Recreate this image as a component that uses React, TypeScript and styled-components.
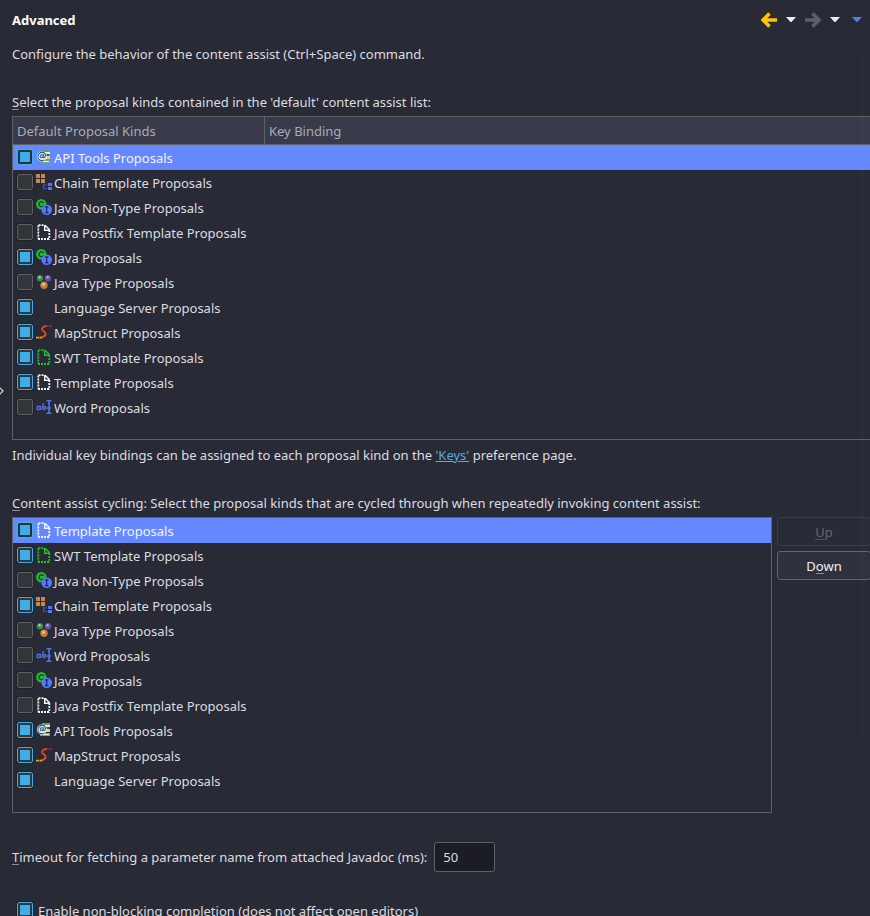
import React from 'react';
import styled, { createGlobalStyle, css } from 'styled-components';

const GlobalStyle = createGlobalStyle`
  *, *::before, *::after { box-sizing: border-box; }
  body {
    margin: 0;
    background: #282a35;
    color: #dcdde0;
    font: 13px/18px "Noto Sans", sans-serif;
    overflow: hidden;
  }
`;

const Page = styled.main`
  position: relative;
  padding: 8px 0 0 12px;
  overflow: hidden;
`;

const Header = styled.header`
  display: flex;
  align-items: center;
  justify-content: space-between;
  height: 24px;
`;

const Title = styled.h1`
  margin: 0;
  font-size: 13px;
  line-height: 18px;
  font-weight: 700;
  color: #fff;
`;

const Toolbar = styled.div`
  display: flex;
  align-items: center;
  padding-right: 8px;
`;

const ToolButton = styled.button<{ $gap: number }>`
  display: flex;
  margin: 0 0 0 ${(p) => p.$gap}px;
  padding: 0;
  border: 0;
  background: none;
`;

const Paragraph = styled.p<{ $top: number }>`
  margin: ${(p) => p.$top}px 0 0;
`;

const Mnemonic = styled.span`
  border-bottom: 1px solid #8b8c92;
  display: inline-block;
  line-height: 14px;
`;

const Link = styled.a`
  color: #5aa9e0;
  text-decoration: underline;
`;

const ProposalTable = styled.table`
  width: 100%;
  margin-top: 5px;
  border-spacing: 0;
  border: 1px solid #5f6265;
  border-right: 0;
  padding-bottom: 19px;
  table-layout: fixed;
`;

const HeadCell = styled.th<{ $width?: number }>`
  width: ${(p) => (p.$width ? `${p.$width}px` : 'auto')};
  height: 28px;
  padding: 0 4px;
  text-align: left;
  font-weight: 400;
  color: #a9abb5;
  background: #393b4b;
  border-bottom: 1px solid #5f6265;

  & + & {
    border-left: 1px solid #5f6265;
  }
`;

const selectedRow = css`
  background: #6688ff;
  color: #f2f4ff;
`;

const BodyRow = styled.tr<{ $selected: boolean }>`
  ${(p) => p.$selected && selectedRow}
`;

const BodyCell = styled.td`
  height: 25px;
  padding: 0 0 0 4px;
`;

const List = styled.ul`
  margin: 0;
  padding: 0 0 19px;
  list-style: none;
  border: 1px solid #5f6265;
`;

const ListItem = styled.li<{ $selected: boolean }>`
  height: 25px;
  padding-left: 4px;
  display: flex;
  align-items: center;
  ${(p) => p.$selected && selectedRow}
`;

const ItemLabel = styled.label`
  display: flex;
  align-items: center;
`;

const IconSlot = styled.span`
  display: flex;
  width: 16px;
  height: 16px;
  margin: 0 2px 0 3px;
  align-self: flex-start;
`;

const Checkbox = styled.input`
  appearance: none;
  width: 16px;
  height: 16px;
  margin: 0;
  flex: none;
  align-self: flex-start;
  border: 1px solid #5f6265;
  border-radius: 2px;
  background: #31363b;
  outline: 1px solid #202228;

  &:checked {
    border-color: #3daee9;
    background: linear-gradient(#3daee9, #3daee9) center / 10px 10px no-repeat #31363b;
  }
`;

const SelectedCheckbox = styled(Checkbox)`
  outline-color: #4b9ff0;

  &&:checked {
    border-color: #3daee9;
    background: #3daee9;
    box-shadow: inset 0 0 0 2px #2d3238;
  }
`;

const Cycling = styled.section`
  display: grid;
  grid-template-columns: 1fr 94px;
  column-gap: 5px;
  margin: 5px -1px 0 0;
`;

const ButtonColumn = styled.div`
  display: flex;
  flex-direction: column;
  gap: 5px;
`;

const PushButton = styled.button`
  height: 29px;
  padding: 0;
  font: inherit;
  color: #f0f1f3;
  background: #2f313f;
  border: 1px solid #62656a;
  border-radius: 3px;

  &:disabled {
    color: #65676e;
    background: #292b36;
    border-color: #3b3d46;
  }

  &:disabled ${Mnemonic} {
    border-color: #50525a;
  }
`;

const Field = styled.div`
  display: flex;
  align-items: center;
  gap: 7px;
  margin-top: 29px;
`;

const NumberInput = styled.input`
  width: 61px;
  height: 30px;
  padding: 0 8px;
  font: inherit;
  color: #dcdde0;
  background: #1b1c24;
  border: 1px solid #5f6265;
  border-radius: 3px;
`;

const Option = styled.label`
  display: flex;
  align-items: center;
  gap: 5px;
  margin: 30px 0 0 5px;
`;

const ScrollThumb = styled.div`
  position: absolute;
  top: 50px;
  right: 4px;
  width: 6px;
  height: 692px;
  border-radius: 3px;
  background: rgba(255, 255, 255, 0.012);
`;

const Expander = styled.button`
  position: absolute;
  left: 0;
  top: 386px;
  padding: 0;
  border: 0;
  background: none;
  display: flex;
`;

type IconKind = 'api' | 'chain' | 'java' | 'page' | 'greenPage' | 'types' | 'map' | 'word' | 'none';

function PageIcon({ color }: { color: string }) {
  return (
    <svg width="16" height="16" viewBox="0 0 16 16" fill="none" stroke={color}>
      <path d="M2.3 1.5v13" strokeWidth="1.8" strokeDasharray="2 1" />
      <path d="M2 15h12" strokeWidth="1.8" strokeDasharray="2 1" />
      <path d="M13.3 6v9.5" strokeWidth="1.8" strokeDasharray="2 1" />
      <path d="M2.5 1.2h6" strokeWidth="1.7" strokeDasharray="2 1" />
      <path d="M8.7 1v5.2h5M9 1.2l4.6 4.6" strokeWidth="1.5" />
    </svg>
  );
}

function ProposalIcon({ kind }: { kind: IconKind }) {
  switch (kind) {
    case 'api':
      return (
        <svg width="16" height="16" viewBox="0 0 16 16">
          <path d="M6 1h8v2H6z" fill="#6d9a62" />
          <path d="M7 3h7v2H7z" fill="#e9eed8" />
          <path d="M10 5h3v2h-3z" fill="#35588f" />
          <path d="M9 7h5v3H9z" fill="#ecd65b" />
          <path d="M4 11h10v3H4z" fill="#78a67d" />
          <path d="M7 12h6v1H7z" fill="#e5edd8" />
          <circle cx="5.8" cy="7.5" r="5" fill="#e5eff5" />
          <path
            d="M8.5 10.9C6 12.4 1.9 11.4 1.9 7.7 1.9 5.1 4 3.4 6.2 3.4c2.2 0 3.5 1.5 3.2 3.5-.2 1.8-2.5 2.5-2.2.6l.4-2.2M7.1 7.2C6.1 9.4 4 9.1 4.3 7.2c.4-1.7 2.5-2.1 2.9-.5"
            fill="none"
            stroke="#2c5f82"
            strokeWidth="1.1"
          />
        </svg>
      );
    case 'chain':
      return (
        <svg width="16" height="16" viewBox="0 0 16 16">
          <path d="M0 0h4v4H0zM5 0h4v4H5zM0 5h4v4H0zM5 5h4v4H5z" fill="#c88745" />
          <path d="M7.5 9.5v5H11M7.5 11H11" stroke="#4158c8" fill="none" />
          <path d="M12 9h4v3h-4zM12 13h4v3h-4z" fill="#5575f5" />
        </svg>
      );
    case 'java':
      return (
        <svg width="16" height="16" viewBox="0 0 16 16">
          <circle cx="5.3" cy="5.2" r="5.2" fill="#24b832" />
          <path d="M7.6 3.8C6.5 2.2 3 2.5 3 5.2c0 2.8 3.5 3 4.6 1.4" fill="none" stroke="#123d20" strokeWidth="1.3" />
          <circle cx="10.7" cy="10.7" r="5.3" fill="#5878fa" />
          <path d="M9 7.8h3.4M10.7 7.8v5.8M9 13.6h3.4" stroke="#1b285e" strokeWidth="1.2" />
        </svg>
      );
    case 'page':
      return <PageIcon color="#f4f4f5" />;
    case 'greenPage':
      return <PageIcon color="#24bd32" />;
    case 'types':
      return (
        <svg width="16" height="16" viewBox="0 0 16 16">
          <circle cx="4" cy="4.2" r="3.2" fill="#3b8750" />
          <circle cx="3.6" cy="3.3" r="1.2" fill="#a5d3a8" />
          <circle cx="12" cy="4.2" r="3.2" fill="#6450a6" />
          <circle cx="11.6" cy="3.3" r="1.2" fill="#b5a5dd" />
          <circle cx="8" cy="11.2" r="3.7" fill="#c67e38" />
          <circle cx="7.5" cy="10.2" r="1.5" fill="#f1c68a" />
        </svg>
      );
    case 'map':
      return (
        <svg width="16" height="16" viewBox="0 0 16 16" fill="none">
          <path
            d="M11 2C8 2 5.5 3.8 6 5.5 6.6 7.2 10.2 7.6 9.6 10.2 9.1 12.2 7.3 13 5.5 13.3"
            stroke="#e34c25"
            strokeWidth="1.8"
          />
          <path d="M0 13.6h6" stroke="#f39a18" strokeWidth="1.8" strokeDasharray="3 .5" />
          <path d="M9.5 1.9H16" stroke="#c5202c" strokeWidth="1.5" strokeDasharray="3 .8" />
        </svg>
      );
    case 'word':
      return (
        <svg width="16" height="16" viewBox="0 0 16 16" fill="none" stroke="#5272f0">
          <circle cx="2.7" cy="9" r="1.7" strokeWidth="1.4" />
          <path d="M4.7 6.800v4.200" strokeWidth="1.2" />
          <path d="M7 4v7" strokeWidth="1.3" />
          <circle cx="8.500" cy="9" r="1.500" strokeWidth="1.3" />
          <path d="M13 2v12M10.500 1.800h1.500l1 .7 1-.7h1.500M10.500 14.200h1.500l1-.7 1 .7h1.500M11 9h4" strokeWidth="1.600" />
        </svg>
      );
    default:
      return null;
  }
}

function Caret({ color }: { color: string }) {
  return (
    <svg width="10" height="6" viewBox="0 0 10 6">
      <path d="M0 0h10L5.5 5h-1z" fill={color} />
    </svg>
  );
}

function Arrow({ color, flip }: { color: string; flip?: boolean }) {
  return (
    <svg width="16" height="16" viewBox="0 0 16 16" fill="none" stroke={color}>
      <path
        d={flip ? 'M0 8h14M7.5 1.5L14 8l-6.5 6.5' : 'M16 8H2M8.5 1.5L2 8l6.5 6.5'}
        strokeWidth="3.6"
      />
    </svg>
  );
}

interface Proposal {
  name: string;
  icon: IconKind;
  checked: boolean;
}

const kinds: Proposal[] = [
  { name: 'API Tools Proposals', icon: 'api', checked: true },
  { name: 'Chain Template Proposals', icon: 'chain', checked: false },
  { name: 'Java Non-Type Proposals', icon: 'java', checked: false },
  { name: 'Java Postfix Template Proposals', icon: 'page', checked: false },
  { name: 'Java Proposals', icon: 'java', checked: true },
  { name: 'Java Type Proposals', icon: 'types', checked: false },
  { name: 'Language Server Proposals', icon: 'none', checked: true },
  { name: 'MapStruct Proposals', icon: 'map', checked: true },
  { name: 'SWT Template Proposals', icon: 'greenPage', checked: true },
  { name: 'Template Proposals', icon: 'page', checked: true },
  { name: 'Word Proposals', icon: 'word', checked: false },
];

const cycle: Proposal[] = [
  { name: 'Template Proposals', icon: 'page', checked: true },
  { name: 'SWT Template Proposals', icon: 'greenPage', checked: true },
  { name: 'Java Non-Type Proposals', icon: 'java', checked: false },
  { name: 'Chain Template Proposals', icon: 'chain', checked: true },
  { name: 'Java Type Proposals', icon: 'types', checked: false },
  { name: 'Word Proposals', icon: 'word', checked: false },
  { name: 'Java Proposals', icon: 'java', checked: false },
  { name: 'Java Postfix Template Proposals', icon: 'page', checked: false },
  { name: 'API Tools Proposals', icon: 'api', checked: true },
  { name: 'MapStruct Proposals', icon: 'map', checked: true },
  { name: 'Language Server Proposals', icon: 'none', checked: true },
];

function ProposalEntry({ item, selected }: { item: Proposal; selected: boolean }) {
  const Box = selected ? SelectedCheckbox : Checkbox;
  return (
    <ItemLabel>
      <Box type="checkbox" defaultChecked={item.checked} />
      <IconSlot>
        <ProposalIcon kind={item.icon} />
      </IconSlot>
      {item.name}
    </ItemLabel>
  );
}

export default function App() {
  return (
    <Page>
      <GlobalStyle />
      <Header>
        <Title>Advanced</Title>
        <Toolbar>
          <ToolButton $gap={0} aria-label="Back"><Arrow color="#ffc20a" /></ToolButton>
          <ToolButton $gap={9} aria-label="Back history"><Caret color="#eeeef0" /></ToolButton>
          <ToolButton $gap={9} aria-label="Forward" disabled><Arrow color="#5e6069" flip /></ToolButton>
          <ToolButton $gap={9} aria-label="Forward history"><Caret color="#eeeef0" /></ToolButton>
          <ToolButton $gap={12} aria-label="View menu"><Caret color="#5878ff" /></ToolButton>
        </Toolbar>
      </Header>
      <Paragraph $top={13}>
        Configure the behavior of the content assist (Ctrl+Space) command.
      </Paragraph>
      <Paragraph $top={30} id="kinds-label">
        <Mnemonic>S</Mnemonic>elect the proposal kinds contained in the 'default' content assist list:
      </Paragraph>
      <ProposalTable aria-labelledby="kinds-label">
        <thead>
          <tr>
            <HeadCell $width={251}>Default Proposal Kinds</HeadCell>
            <HeadCell>Key Binding</HeadCell>
          </tr>
        </thead>
        <tbody>
          {kinds.map((item, i) => (
            <BodyRow key={item.name} $selected={i === 0}>
              <BodyCell><ProposalEntry item={item} selected={i === 0} /></BodyCell>
              <BodyCell />
            </BodyRow>
          ))}
        </tbody>
      </ProposalTable>
      <Paragraph $top={6}>
        Individual key bindings can be assigned to each proposal kind on the{' '}
        <Link href="#keys">'Keys'</Link> preference page.
      </Paragraph>
      <Paragraph $top={30} id="cycle-label">
        <Mnemonic>C</Mnemonic>ontent assist cycling: Select the proposal kinds that are cycled through when repeatedly invoking content assist:
      </Paragraph>
      <Cycling>
        <List aria-labelledby="cycle-label">
          {cycle.map((item, i) => (
            <ListItem key={item.name} $selected={i === 0}>
              <ProposalEntry item={item} selected={i === 0} />
            </ListItem>
          ))}
        </List>
        <ButtonColumn>
          <PushButton disabled><Mnemonic>U</Mnemonic>p</PushButton>
          <PushButton>D<Mnemonic>o</Mnemonic>wn</PushButton>
        </ButtonColumn>
      </Cycling>
      <Field>
        <label htmlFor="timeout"><Mnemonic>T</Mnemonic>imeout for fetching a parameter name from attached Javadoc (ms):</label>
        <NumberInput id="timeout" type="text" defaultValue="50" />
      </Field>
      <Option>
        <Checkbox type="checkbox" defaultChecked />
        Enable non-blocking completion (does not affect open editors)
      </Option>
      <ScrollThumb />
      <Expander aria-label="Expand navigation">
        <svg width="4" height="10" viewBox="0 0 4 10" fill="none" stroke="#dcdde0">
          <path d="M-1 1l4 4-4 4" strokeWidth="1.2" />
        </svg>
      </Expander>
    </Page>
  );
}
